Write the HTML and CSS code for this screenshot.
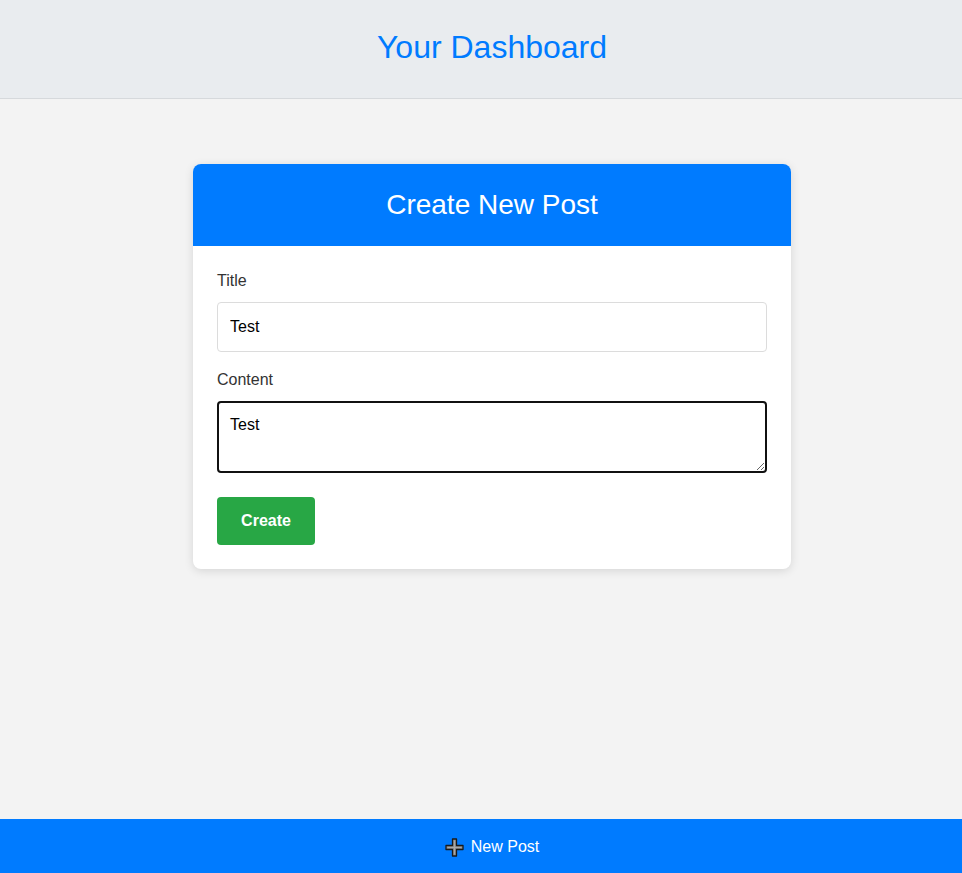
FILE: index.html
```html
<!DOCTYPE html>
<html lang="en">
<head>
<meta charset="utf-8">
<title>Your Dashboard</title>
<link rel="stylesheet" href="styles.css">
</head>
<body>
<header class="topbar">
  <h1 class="topbar-title">Your Dashboard</h1>
</header>
<main class="main">
  <section class="card">
    <div class="card-header">
      <h2 class="card-title">Create New Post</h2>
    </div>
    <form class="card-body">
      <label class="field-label" for="title">Title</label>
      <input class="field-input" id="title" type="text" value="Test">
      <label class="field-label" for="content">Content</label>
      <textarea class="field-textarea" id="content">Test</textarea>
      <button class="btn-create" type="button">Create</button>
    </form>
  </section>
</main>
<footer class="bottombar">
  <span class="plus-icon">
    <svg width="19" height="19" viewBox="0 0 19 19">
      <path d="M7.5 1 H11.5 V7.5 H18 V11.5 H11.5 V18 H7.5 V11.5 H1 V7.5 H7.5 Z" fill="#8c8c8c" stroke="#1a1a1a" stroke-width="1.3" stroke-linejoin="round"/>
      <path d="M9.5 2.5 V16.5 M2.5 9.5 H16.5" fill="none" stroke="#a8a8a8" stroke-width="1"/>
    </svg>
  </span>
  <span class="bottombar-text">New Post</span>
</footer>
</body>
</html>
```

FILE: styles.css
```css
* {
  box-sizing: border-box;
}

html, body {
  margin: 0;
  padding: 0;
}

body {
  font-family: "Liberation Sans", Arial, sans-serif;
  background: #f3f3f3;
  color: #333;
  min-height: 873px;
}

.topbar {
  height: 99px;
  padding-left: 22px;
  background: #e9ecef;
  border-bottom: 1px solid #d6d9dc;
  display: flex;
  align-items: center;
  justify-content: center;
}

.topbar-title {
  margin: 0;
  font-size: 32px;
  font-weight: 400;
  color: #007bff;
  line-height: 36px;
  padding-bottom: 4px;
}

.main {
  display: flex;
  justify-content: center;
  padding-top: 65px;
  padding-left: 22px;
}

.card {
  width: 598px;
  background: #fff;
  border-radius: 8px;
  box-shadow: 0 2px 10px rgba(0, 0, 0, 0.12);
  overflow: hidden;
}

.card-header {
  height: 82px;
  background: #007bff;
  display: flex;
  align-items: center;
  justify-content: center;
}

.card-title {
  margin: 0;
  font-size: 28px;
  font-weight: 400;
  color: #fff;
  line-height: 32px;
}

.card-body {
  padding: 24px;
  display: flex;
  flex-direction: column;
  align-items: flex-start;
}

.field-label {
  display: block;
  font-size: 16px;
  line-height: 22px;
  color: #333;
  margin-bottom: 10px;
}

.field-input {
  width: 100%;
  height: 50px;
  padding: 0 12px;
  border: 1px solid #dcdcdc;
  border-radius: 4px;
  font-family: "Liberation Sans", Arial, sans-serif;
  font-size: 16px;
  color: #000;
  margin-bottom: 17px;
  background: #fff;
}

.field-textarea {
  width: 100%;
  height: 72px;
  padding: 12px 11px 10px;
  border: 2px solid #111;
  border-radius: 4px;
  font-family: "Liberation Sans", Arial, sans-serif;
  font-size: 16px;
  line-height: 20px;
  color: #000;
  resize: vertical;
  margin: 0 0 24px 0;
  display: block;
  outline: none;
}

.btn-create {
  width: 98px;
  height: 48px;
  background: #28a745;
  color: #fff;
  border: none;
  border-radius: 4px;
  font-family: "Liberation Sans", Arial, sans-serif;
  font-size: 16px;
  font-weight: 700;
  cursor: pointer;
}

.bottombar {
  position: fixed;
  left: 0;
  right: 0;
  bottom: 0;
  height: 54px;
  padding-left: 22px;
  padding-top: 2px;
  background: #007bff;
  display: flex;
  align-items: center;
  justify-content: center;
  gap: 7px;
  color: #fff;
  font-size: 16px;
}

.plus-icon {
  display: flex;
  width: 19px;
  height: 19px;
}

.bottombar-text {
  line-height: 20px;
}
```
